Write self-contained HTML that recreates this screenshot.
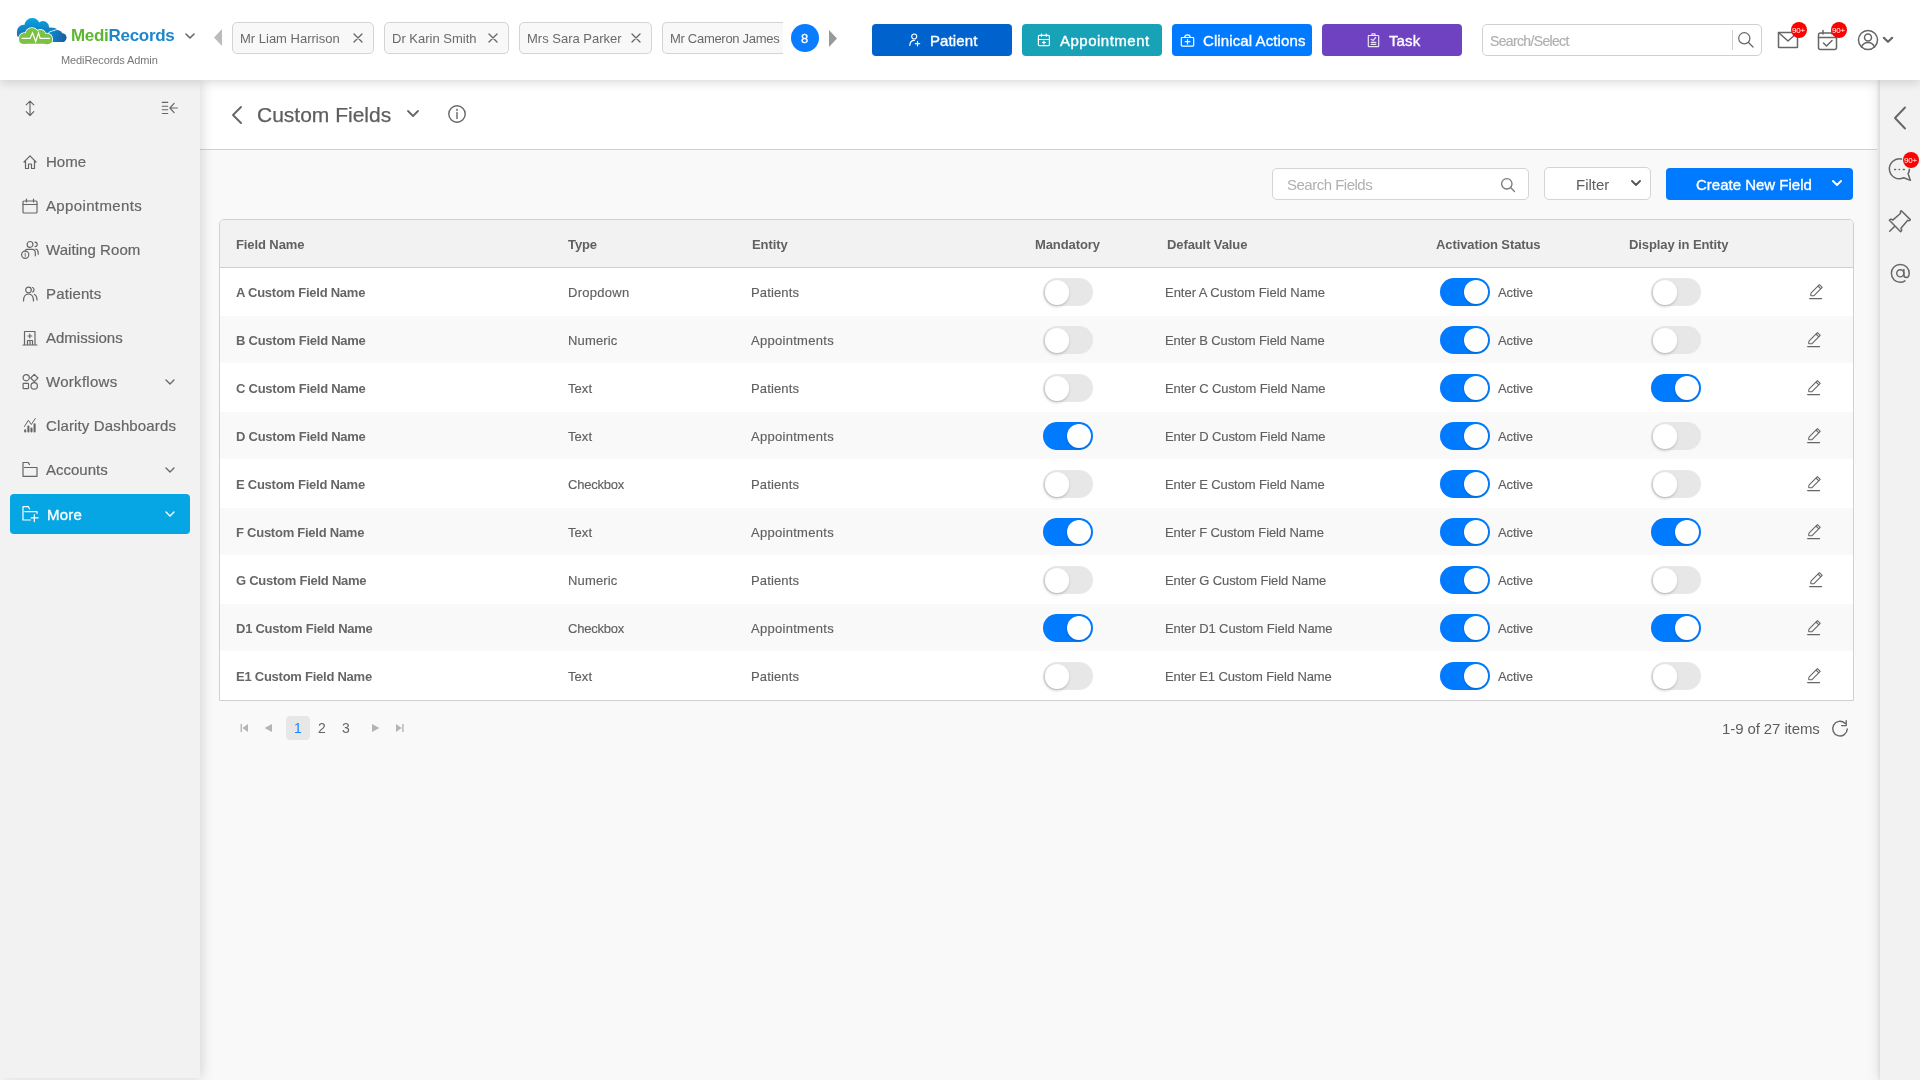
<!DOCTYPE html>
<html><head><meta charset="utf-8"><title>Custom Fields</title>
<style>
html,body{margin:0;padding:0;}
body{width:1920px;height:1080px;overflow:hidden;position:relative;background:#f9f9f9;font-family:"Liberation Sans",sans-serif;}
.t{position:absolute;white-space:nowrap;will-change:transform;}
.b{position:absolute;}
.i{position:absolute;overflow:visible;}
</style></head><body>
<div class="b" style="left:0px;top:0px;width:1920px;height:80px;background:#fff;z-index:5;box-shadow:0 2px 10px rgba(0,0,0,0.16);"></div>
<svg class="i" style="left:14px;top:14px;z-index:6;" width="58" height="34" viewBox="0 0 1842 1080">
<defs>
<linearGradient id="lb" gradientUnits="userSpaceOnUse" x1="0" y1="130" x2="0" y2="760"><stop offset="0" stop-color="#03a5e5"/><stop offset="1" stop-color="#1f6aac"/></linearGradient>
<linearGradient id="lr" gradientUnits="userSpaceOnUse" x1="1150" y1="650" x2="1650" y2="800"><stop offset="0" stop-color="#0a8ad2"/><stop offset="1" stop-color="#1c5b9b"/></linearGradient>
</defs>
<g fill="url(#lb)">
<circle cx="310" cy="560" r="215"/><circle cx="580" cy="385" r="255"/><circle cx="920" cy="420" r="195"/>
<ellipse cx="1170" cy="520" rx="210" ry="95"/><rect x="95" y="520" width="1000" height="210" rx="60"/>
</g>
<g fill="#fff">
<circle cx="1370" cy="700" r="212"/><circle cx="1530" cy="750" r="162"/><ellipse cx="1250" cy="660" rx="180" ry="132"/><rect x="1080" y="700" width="520" height="212" rx="40"/>
</g>
<g fill="url(#lr)">
<circle cx="1370" cy="700" r="190"/><circle cx="1530" cy="750" r="140"/><ellipse cx="1250" cy="660" rx="160" ry="110"/><rect x="1100" y="720" width="500" height="170" rx="20"/>
</g>
<g fill="#fff">
<circle cx="330" cy="775" r="195"/><circle cx="570" cy="655" r="235"/><circle cx="840" cy="665" r="185"/><circle cx="1040" cy="790" r="195"/><rect x="150" y="700" width="1085" height="270" rx="150"/>
</g>
<g fill="#7bc143">
<circle cx="330" cy="775" r="170"/><circle cx="570" cy="655" r="210"/><circle cx="840" cy="665" r="160"/><circle cx="1040" cy="790" r="170"/><rect x="170" y="720" width="1040" height="225" rx="130"/>
</g>
<polyline points="240,775 510,775 590,600 690,880 780,600 830,775 1140,775" fill="none" stroke="#fff" stroke-width="38" stroke-linejoin="miter"/>
</svg>
<div class="t" style="left:71px;top:27.41px;font-size:17px;line-height:17px;height:17px;font-weight:700;color:#1f87c9;letter-spacing:-0.3px;z-index:6;"><span style="color:#5bb630">Medi</span><span style="color:#1f87c9">Records</span></div>
<svg class="i" style="left:185px;top:33px;z-index:6;stroke-width:1.6" width="10" height="7" viewBox="0 0 10 7" fill="none" stroke="#666" stroke-width="1.2" stroke-linecap="round" stroke-linejoin="round"><path d="M1 1 L5 5 L9 1"/></svg>
<div class="t" style="left:61px;top:54.65px;font-size:11px;line-height:11px;height:11px;font-weight:400;color:#777;letter-spacing:-0.1px;z-index:6;">MediRecords Admin</div>
<svg class="i" style="left:214px;top:29px;z-index:6;" width="8" height="17" viewBox="0 0 8 17"><path d="M8 0 L0 8.5 L8 17 Z" fill="#bbb"/></svg>
<div class="b" style="left:232px;top:22px;width:142px;height:32px;background:#f8f8f8;border:1px solid #d4d4d4;border-radius:5px;box-sizing:border-box;z-index:6;"></div>
<div class="t" style="left:240px;top:32.23px;font-size:13px;line-height:13px;height:13px;font-weight:400;color:#6a6a6a;letter-spacing:0px;z-index:6;">Mr Liam Harrison</div>
<svg class="i" style="left:353px;top:33px;z-index:6;stroke-width:1.3" width="10" height="10" viewBox="0 0 10 10" fill="none" stroke="#666" stroke-width="1.2" stroke-linecap="round" stroke-linejoin="round"><path d="M1 1 L9 9 M9 1 L1 9"/></svg>
<div class="b" style="left:384px;top:22px;width:125px;height:32px;background:#f8f8f8;border:1px solid #d4d4d4;border-radius:5px;box-sizing:border-box;z-index:6;"></div>
<div class="t" style="left:392px;top:32.23px;font-size:13px;line-height:13px;height:13px;font-weight:400;color:#6a6a6a;letter-spacing:0px;z-index:6;">Dr Karin Smith</div>
<svg class="i" style="left:488px;top:33px;z-index:6;stroke-width:1.3" width="10" height="10" viewBox="0 0 10 10" fill="none" stroke="#666" stroke-width="1.2" stroke-linecap="round" stroke-linejoin="round"><path d="M1 1 L9 9 M9 1 L1 9"/></svg>
<div class="b" style="left:519px;top:22px;width:133px;height:32px;background:#f8f8f8;border:1px solid #d4d4d4;border-radius:5px;box-sizing:border-box;z-index:6;"></div>
<div class="t" style="left:527px;top:32.23px;font-size:13px;line-height:13px;height:13px;font-weight:400;color:#6a6a6a;letter-spacing:0px;z-index:6;">Mrs Sara Parker</div>
<svg class="i" style="left:631px;top:33px;z-index:6;stroke-width:1.3" width="10" height="10" viewBox="0 0 10 10" fill="none" stroke="#666" stroke-width="1.2" stroke-linecap="round" stroke-linejoin="round"><path d="M1 1 L9 9 M9 1 L1 9"/></svg>
<div class="b" style="left:662px;top:22px;width:121px;height:32px;background:#f8f8f8;border:1px solid #d4d4d4;border-right:none;border-radius:5px 0 0 5px;box-sizing:border-box;overflow:hidden;z-index:6;"></div>
<div class="t" style="left:670px;top:32.23px;font-size:13px;line-height:13px;height:13px;font-weight:400;color:#6a6a6a;letter-spacing:-0.3px;z-index:6;width:113px;overflow:hidden;">Mr Cameron James</div>
<div class="b" style="left:791px;top:24px;width:28px;height:28px;background:#0a7cff;border-radius:50%;z-index:6;"></div>
<div class="t" style="left:801px;top:32.23px;font-size:13px;line-height:13px;height:13px;font-weight:400;color:#fff;letter-spacing:0px;z-index:6;-webkit-text-stroke:0.3px #fff;">8</div>
<svg class="i" style="left:829px;top:30px;z-index:6;" width="8" height="17" viewBox="0 0 8 17"><path d="M0 0 L8 8.5 L0 17 Z" fill="#999"/></svg>
<div class="b" style="left:872px;top:24px;width:140px;height:32px;background:#0062cc;border-radius:4px;z-index:6;"></div>
<div class="t" style="left:930px;top:33.42px;font-size:15px;line-height:15px;height:15px;font-weight:400;color:#fff;letter-spacing:0.1px;z-index:6;-webkit-text-stroke:0.35px #fff;">Patient</div>
<div class="b" style="left:1022px;top:24px;width:140px;height:32px;background:#17a2b8;border-radius:4px;z-index:6;"></div>
<div class="t" style="left:1059.5px;top:33.42px;font-size:15px;line-height:15px;height:15px;font-weight:400;color:#fff;letter-spacing:0.5px;z-index:6;-webkit-text-stroke:0.35px #fff;">Appointment</div>
<div class="b" style="left:1172px;top:24px;width:140px;height:32px;background:#007bff;border-radius:4px;z-index:6;"></div>
<div class="t" style="left:1203px;top:33.42px;font-size:15px;line-height:15px;height:15px;font-weight:400;color:#fff;letter-spacing:0.1px;z-index:6;-webkit-text-stroke:0.35px #fff;">Clinical Actions</div>
<div class="b" style="left:1322px;top:24px;width:140px;height:32px;background:#6f42c1;border-radius:4px;z-index:6;"></div>
<div class="t" style="left:1389px;top:33.42px;font-size:15px;line-height:15px;height:15px;font-weight:400;color:#fff;letter-spacing:0.1px;z-index:6;-webkit-text-stroke:0.35px #fff;">Task</div>
<svg class="i" style="left:907px;top:33px;z-index:6;" width="14" height="14" viewBox="0 0 14 14" fill="none" stroke="#666" stroke-width="1.2" stroke-linecap="round" stroke-linejoin="round"><g stroke="#fff"><circle cx="7.2" cy="3.5" r="2.5"/><path d="M2.8 12.5 Q3 7.4 7.4 7.4"/><path d="M10.5 8.4 V12.8 M8.3 10.6 H12.7"/></g></svg>
<svg class="i" style="left:1036px;top:32px;z-index:6;" width="15" height="15" viewBox="0 0 15 15" fill="none" stroke="#666" stroke-width="1.2" stroke-linecap="round" stroke-linejoin="round"><g stroke="#fff"><rect x="2.4" y="3.3" width="11" height="10.4" rx="1"/><path d="M2.4 7.5 H13.4 M5.5 2 V4.2 M10.2 2 V4.2 M7.9 9 V12 M6.4 10.5 H9.4"/></g></svg>
<svg class="i" style="left:1180px;top:32px;z-index:6;" width="15" height="15" viewBox="0 0 15 15" fill="none" stroke="#666" stroke-width="1.2" stroke-linecap="round" stroke-linejoin="round"><g stroke="#fff"><rect x="1.3" y="5.5" width="12.4" height="8.6" rx="0.8"/><path d="M4.8 5.3 Q4.8 2.8 7.5 2.8 Q10.2 2.8 10.2 5.3 M7.5 7.5 V12 M5.2 9.7 H9.8"/></g></svg>
<svg class="i" style="left:1366px;top:32px;z-index:6;" width="14" height="15" viewBox="0 0 14 15" fill="none" stroke="#666" stroke-width="1.2" stroke-linecap="round" stroke-linejoin="round"><g stroke="#fff" stroke-opacity="0.85"><rect x="2.3" y="3.5" width="10.4" height="11.2" rx="0.6"/><path d="M6 3.3 V1.8 H9 V3.3 M5.2 7.3 L7 8.6 L9.6 5.5 M5.2 10.4 H9.8 M5.2 12.4 H9.8"/></g></svg>
<div class="b" style="left:1482px;top:24px;width:280px;height:32px;background:#fff;border:1px solid #d0d0d0;border-radius:5px;box-sizing:border-box;z-index:6;"></div>
<div class="t" style="left:1490px;top:33.83px;font-size:14px;line-height:14px;height:14px;font-weight:400;color:#b0b0b0;letter-spacing:-0.65px;z-index:6;-webkit-text-stroke:0.2px #b0b0b0;">Search/Select</div>
<div class="b" style="left:1732px;top:30px;width:1px;height:20px;background:#d0d0d0;z-index:6;"></div>
<svg class="i" style="left:1737px;top:31px;z-index:6;stroke-width:1.2" width="18" height="18" viewBox="0 0 18 18" fill="none" stroke="#666" stroke-width="1.2" stroke-linecap="round" stroke-linejoin="round"><circle cx="7.3" cy="7.3" r="5.6"/><path d="M11.5 11.5 L16 16"/></svg>
<svg class="i" style="left:1777px;top:30px;z-index:6;stroke-width:1.5" width="22" height="19" viewBox="0 0 22 19" fill="none" stroke="#666" stroke-width="1.2" stroke-linecap="round" stroke-linejoin="round"><rect x="1.5" y="2.5" width="19" height="15" rx="0.5"/><path d="M1.5 2.5 L11 11 L20.5 2.5"/></svg>
<div class="b" style="left:1791px;top:22px;width:16px;height:16px;background:#f00;border-radius:50%;z-index:6;"></div>
<div class="t" style="left:1792px;top:26.96px;font-size:8px;line-height:8px;height:8px;font-weight:400;color:#fff;letter-spacing:-0.25px;z-index:6;">90+</div>
<svg class="i" style="left:1817px;top:29px;z-index:6;stroke-width:1.5" width="22" height="22" viewBox="0 0 22 22" fill="none" stroke="#666" stroke-width="1.2" stroke-linecap="round" stroke-linejoin="round"><rect x="1.5" y="4" width="18" height="16.5" rx="2"/><path d="M1.5 8.5 H19.5 M6 1.5 V5 M15 1.5 V5 M6.5 14 L9.5 17 L15 11.5"/></svg>
<div class="b" style="left:1831px;top:22px;width:16px;height:16px;background:#f00;border-radius:50%;z-index:6;"></div>
<div class="t" style="left:1832px;top:26.96px;font-size:8px;line-height:8px;height:8px;font-weight:400;color:#fff;letter-spacing:-0.25px;z-index:6;">90+</div>
<svg class="i" style="left:1856px;top:29px;z-index:6;stroke-width:1.5" width="24" height="22" viewBox="0 0 24 22" fill="none" stroke="#666" stroke-width="1.2" stroke-linecap="round" stroke-linejoin="round"><circle cx="12" cy="11" r="9.5"/><circle cx="12" cy="8.5" r="3.5"/><path d="M5.5 18 C7 14.5 9.5 13.5 12 13.5 C14.5 13.5 17 14.5 18.5 18"/></svg>
<svg class="i" style="left:1882px;top:36px;z-index:6;stroke-width:2.2" width="12" height="8" viewBox="0 0 12 8" fill="none" stroke="#666" stroke-width="1.2" stroke-linecap="round" stroke-linejoin="round"><path d="M1.8 1.8 L6 5.8 L10.2 1.8"/></svg>
<div class="b" style="left:0px;top:80px;width:200px;height:998px;background:#f2f2f2;z-index:3;box-shadow:2px 0 12px rgba(0,0,0,0.15);"></div>
<svg class="i" style="left:23px;top:100px;z-index:4;stroke-width:1.15" width="14" height="17" viewBox="0 0 14 17" fill="none" stroke="#666" stroke-width="1.2" stroke-linecap="round" stroke-linejoin="round"><path d="M7 1.3 V15.3 M3.2 4.9 L7 1.1 L10.8 4.9 M3.2 11.7 L7 15.5 L10.8 11.7"/></svg>
<svg class="i" style="left:161px;top:100px;z-index:4;stroke-width:1.15" width="18" height="15" viewBox="0 0 18 15" fill="none" stroke="#666" stroke-width="1.2" stroke-linecap="round" stroke-linejoin="round"><path d="M1.3 2.4 H6.7 M1.3 6.2 H6.7 M1.3 9.7 H6.7 M1.3 13.5 H6.7 M8.9 8 H16.4 M13.1 3.3 L8.9 8 L13.1 12.6"/></svg>
<svg class="i" style="left:22px;top:154px;z-index:4;stroke-width:1.2" width="16" height="16" viewBox="0 0 16 16" fill="none" stroke="#666" stroke-width="1.2" stroke-linecap="round" stroke-linejoin="round"><path d="M2 8 L8 1.8 L14 8 M3.5 6.5 V14.5 H6.5 V10 H9.5 V14.5 H12.5 V6.5"/></svg>
<div class="t" style="left:46.0px;top:154.43px;font-size:15px;line-height:15px;height:15px;font-weight:400;color:#666;letter-spacing:0px;z-index:4;-webkit-text-stroke:0.2px #666;">Home</div>
<svg class="i" style="left:22px;top:198px;z-index:4;stroke-width:1.2" width="16" height="16" viewBox="0 0 16 16" fill="none" stroke="#666" stroke-width="1.2" stroke-linecap="round" stroke-linejoin="round"><rect x="1" y="3" width="14" height="12" rx="1"/><path d="M1 6.5 H15 M4.5 1 V4 M11.5 1 V4"/></svg>
<div class="t" style="left:46.0px;top:198.43px;font-size:15px;line-height:15px;height:15px;font-weight:400;color:#666;letter-spacing:0.36px;z-index:4;-webkit-text-stroke:0.2px #666;">Appointments</div>
<svg class="i" style="left:22px;top:242px;z-index:4;stroke-width:1.2" width="16" height="16" viewBox="0 0 16 16" fill="none" stroke="#666" stroke-width="1.2" stroke-linecap="round" stroke-linejoin="round"><circle cx="8.05" cy="2.4" r="2.9"/><path d="M13 0.2 A2.2 2.2 0 0 1 13 4.6 M3.2 8.9 Q3.5 7.3 5 7.3 H10.2 Q13.3 7.3 13.3 10.5 V13.8 M13.8 7 Q16.2 7.6 16.2 10.8 V12.3"/><circle cx="3.2" cy="12.8" r="3.6"/><path d="M3.2 11.2 V14.4" stroke-width="0.9"/></svg>
<div class="t" style="left:46.0px;top:242.43px;font-size:15px;line-height:15px;height:15px;font-weight:400;color:#666;letter-spacing:0.06px;z-index:4;-webkit-text-stroke:0.2px #666;">Waiting Room</div>
<svg class="i" style="left:22px;top:286px;z-index:4;stroke-width:1.2" width="16" height="16" viewBox="0 0 16 16" fill="none" stroke="#666" stroke-width="1.2" stroke-linecap="round" stroke-linejoin="round"><circle cx="6.5" cy="4" r="2.8"/><path d="M10.5 1.5 C12.5 2 12.5 5.5 10.5 6 M1.5 15 C1.5 10 3.5 8 6.5 8 C9.5 8 11.5 10 11.5 15 M12.5 8.5 C14.5 9.5 15 12 15 14"/></svg>
<div class="t" style="left:46.0px;top:286.43px;font-size:15px;line-height:15px;height:15px;font-weight:400;color:#666;letter-spacing:0.14px;z-index:4;-webkit-text-stroke:0.2px #666;">Patients</div>
<svg class="i" style="left:22px;top:330px;z-index:4;stroke-width:1.2" width="16" height="16" viewBox="0 0 16 16" fill="none" stroke="#666" stroke-width="1.2" stroke-linecap="round" stroke-linejoin="round"><path d="M2.5 15 V1.5 H13 V15 M1 15 H15 M7.8 4 V8 M5.8 6 H9.8 M5.5 15 V10.5 H10.5 V15 M8 10.5 V15"/></svg>
<div class="t" style="left:46.0px;top:330.43px;font-size:15px;line-height:15px;height:15px;font-weight:400;color:#666;letter-spacing:0px;z-index:4;-webkit-text-stroke:0.2px #666;">Admissions</div>
<svg class="i" style="left:22px;top:374px;z-index:4;stroke-width:1.2" width="16" height="16" viewBox="0 0 16 16" fill="none" stroke="#666" stroke-width="1.2" stroke-linecap="round" stroke-linejoin="round"><circle cx="4.2" cy="3.7" r="3.1"/><path d="M12.3 0.4 L15.9 4 L12.3 7.6 L8.7 4 Z"/><rect x="1.1" y="9.3" width="5.4" height="5.4" rx="0.6"/><circle cx="12.2" cy="11.9" r="3.2"/></svg>
<div class="t" style="left:46.0px;top:374.43px;font-size:15px;line-height:15px;height:15px;font-weight:400;color:#666;letter-spacing:0.29px;z-index:4;-webkit-text-stroke:0.2px #666;">Workflows</div>
<svg class="i" style="left:22px;top:418px;z-index:4;stroke-width:1.2" width="16" height="16" viewBox="0 0 16 16" fill="none" stroke="#666" stroke-width="1.2" stroke-linecap="round" stroke-linejoin="round"><path d="M3.2 12.4 V13.4 M6.4 8.6 V13.4 M9.5 10.5 V13.4 M12.6 6.4 V13.4" stroke-width="2.1"/><path d="M2.5 8.5 L6.4 2.2 L9.3 6.5 L13.3 0.5" stroke-width="1"/></svg>
<div class="t" style="left:46.0px;top:418.43px;font-size:15px;line-height:15px;height:15px;font-weight:400;color:#666;letter-spacing:0.14px;z-index:4;-webkit-text-stroke:0.2px #666;">Clarity Dashboards</div>
<svg class="i" style="left:22px;top:462px;z-index:4;stroke-width:1.2" width="16" height="16" viewBox="0 0 16 16" fill="none" stroke="#666" stroke-width="1.2" stroke-linecap="round" stroke-linejoin="round"><path d="M1 14.3 V0.5 H6.3 L7.4 2.4 M2.4 5.5 H15 V14.3 H1"/></svg>
<div class="t" style="left:46.0px;top:462.43px;font-size:15px;line-height:15px;height:15px;font-weight:400;color:#666;letter-spacing:0px;z-index:4;-webkit-text-stroke:0.2px #666;">Accounts</div>
<svg class="i" style="left:165px;top:379px;z-index:4;stroke-width:1.3" width="10" height="7" viewBox="0 0 10 7" fill="none" stroke="#666" stroke-width="1.2" stroke-linecap="round" stroke-linejoin="round"><path d="M1 1 L5 5 L9 1"/></svg>
<svg class="i" style="left:165px;top:467px;z-index:4;stroke-width:1.3" width="10" height="7" viewBox="0 0 10 7" fill="none" stroke="#666" stroke-width="1.2" stroke-linecap="round" stroke-linejoin="round"><path d="M1 1 L5 5 L9 1"/></svg>
<div class="b" style="left:10px;top:494px;width:180px;height:40px;background:#06a5e3;border-radius:4px;z-index:4;"></div>
<svg class="i" style="left:22px;top:506px;z-index:4;stroke:#fff;stroke-width:1.2" width="17" height="17" viewBox="0 0 17 17" fill="none" stroke="#666" stroke-width="1.2" stroke-linecap="round" stroke-linejoin="round"><path d="M1 14 V0.7 H6.5 L7.5 3 M2.8 5.6 H15 V7.5 M1 14 H8.5 M12.3 8.7 V15.7 M9.2 11.8 H16.1"/></svg>
<div class="t" style="left:46.5px;top:506.93px;font-size:15px;line-height:15px;height:15px;font-weight:400;color:#fff;letter-spacing:0.2px;z-index:4;-webkit-text-stroke:0.35px #fff;">More</div>
<svg class="i" style="left:165px;top:511px;z-index:4;stroke:#fff;stroke-width:1.4" width="10" height="7" viewBox="0 0 10 7" fill="none" stroke="#666" stroke-width="1.2" stroke-linecap="round" stroke-linejoin="round"><path d="M1 1 L5 5 L9 1"/></svg>
<div class="b" style="left:1880px;top:80px;width:40px;height:1000px;background:#f2f2f2;z-index:3;box-shadow:-1px 0 3px rgba(0,0,0,0.08), -2px 0 12px rgba(0,0,0,0.10);"></div>
<svg class="i" style="left:1893px;top:106px;z-index:4;stroke-width:1.9" width="14" height="24" viewBox="0 0 14 24" fill="none" stroke="#666" stroke-width="1.2" stroke-linecap="round" stroke-linejoin="round"><path d="M12 1.5 L2 12 L12 22.5"/></svg>
<svg class="i" style="left:1880px;top:150px;z-index:4;stroke-width:1.5" width="40" height="40" viewBox="0 0 40 40" fill="none" stroke="#666" stroke-width="1.2" stroke-linecap="round" stroke-linejoin="round"><path d="M23.7 27.8 A10 10 0 1 1 28.1 23.7 L30.4 30.4 Z"/><path d="M14.6 19.4 H15.6 M19.1 19.4 H19.5 M23.3 19.4 H24.3"/></svg>
<div class="b" style="left:1903px;top:152px;width:16px;height:16px;background:#f00;border-radius:50%;box-shadow:0 0 0 1px #f2f2f2;z-index:4;"></div>
<div class="t" style="left:1904px;top:156.96px;font-size:8px;line-height:8px;height:8px;font-weight:400;color:#fff;letter-spacing:-0.25px;z-index:4;">90+</div>
<svg class="i" style="left:1876.5px;top:208.2px;z-index:4;" width="36" height="36" viewBox="-18 -18 36 36" fill="none" stroke="#666" stroke-width="1.5" stroke-linejoin="round" stroke-linecap="round"><g transform="rotate(45)"><path d="M-6.3 -15.3 H6.3 Q6.9 -13.6 5 -13 L5.8 -2.6 Q8.2 -2.4 8 0 H-8 Q-8.2 -2.4 -5.8 -2.6 L-5 -13 Q-6.9 -13.6 -6.3 -15.3 Z M0 0 V7.5"/></g></svg>
<svg class="i" style="left:1889.8px;top:263.2px;z-index:4;stroke-width:1.55" width="20.6" height="20.6" viewBox="0 0 22 22" fill="none" stroke="#666" stroke-width="1.2" stroke-linecap="round" stroke-linejoin="round"><circle cx="11" cy="11" r="3.8"/><path d="M14.8 7 V12.5 C14.8 14.5 16 15.5 17.5 15.5 C19.5 15.5 20.5 13.5 20.5 11 C20.5 5.5 16.5 1.5 11 1.5 C5.5 1.5 1.5 5.5 1.5 11 C1.5 16.5 5.5 20.5 11 20.5 C13 20.5 14.5 20 16 19"/></svg>
<div class="b" style="left:200px;top:80px;width:1677px;height:69px;background:#fff;border-bottom:1px solid #d2d2d2;z-index:1;"></div>
<svg class="i" style="left:231px;top:106px;z-index:2;stroke-width:1.9" width="12" height="18" viewBox="0 0 12 18" fill="none" stroke="#666" stroke-width="1.2" stroke-linecap="round" stroke-linejoin="round"><path d="M10 1 L2 9 L10 17"/></svg>
<div class="t" style="left:257px;top:104.30px;font-size:21px;line-height:21px;height:21px;font-weight:400;color:#5e5e5e;letter-spacing:0px;z-index:2;-webkit-text-stroke:0.25px #5e5e5e;">Custom Fields</div>
<svg class="i" style="left:406px;top:109px;z-index:2;stroke-width:1.8" width="14" height="10" viewBox="0 0 14 10" fill="none" stroke="#666" stroke-width="1.2" stroke-linecap="round" stroke-linejoin="round"><path d="M2 2 L7 7 L12 2"/></svg>
<svg class="i" style="left:447px;top:104px;z-index:2;stroke-width:1.4" width="20" height="20" viewBox="0 0 20 20" fill="none" stroke="#666" stroke-width="1.2" stroke-linecap="round" stroke-linejoin="round"><circle cx="10" cy="10" r="8.2"/><path d="M10 8.5 V14.5 M10 5.2 V6.4"/></svg>
<div class="b" style="left:1272px;top:168px;width:257px;height:32px;background:#fff;border:1px solid #d4d4d4;border-radius:5px;box-sizing:border-box;z-index:2;"></div>
<div class="t" style="left:1287px;top:176.62px;font-size:15px;line-height:15px;height:15px;font-weight:400;color:#b0b0b0;letter-spacing:-0.5px;z-index:2;">Search Fields</div>
<svg class="i" style="left:1500px;top:177px;z-index:2;stroke-width:1.3;stroke:#777" width="16" height="16" viewBox="0 0 16 16" fill="none" stroke="#666" stroke-width="1.2" stroke-linecap="round" stroke-linejoin="round"><circle cx="6.8" cy="6.8" r="5.2"/><path d="M10.8 10.8 L14.5 14.5"/></svg>
<div class="b" style="left:1544px;top:167px;width:107px;height:33px;background:#fff;border:1px solid #d4d4d4;border-radius:5px;box-sizing:border-box;z-index:2;"></div>
<div class="t" style="left:1575.5px;top:176.62px;font-size:15px;line-height:15px;height:15px;font-weight:400;color:#5e5e5e;letter-spacing:0px;z-index:2;">Filter</div>
<svg class="i" style="left:1630px;top:179px;z-index:2;stroke-width:1.9;stroke:#555" width="12" height="9" viewBox="0 0 12 9" fill="none" stroke="#666" stroke-width="1.2" stroke-linecap="round" stroke-linejoin="round"><path d="M2 2 L6 6 L10 2"/></svg>
<div class="b" style="left:1666px;top:168px;width:187px;height:32px;background:#007bff;border-radius:4px;z-index:2;"></div>
<div class="t" style="left:1696px;top:176.62px;font-size:15px;line-height:15px;height:15px;font-weight:400;color:#fff;letter-spacing:0.0px;z-index:2;-webkit-text-stroke:0.35px #fff;">Create New Field</div>
<svg class="i" style="left:1831px;top:179px;z-index:2;stroke-width:1.9;stroke:#fff" width="12" height="9" viewBox="0 0 12 9" fill="none" stroke="#666" stroke-width="1.2" stroke-linecap="round" stroke-linejoin="round"><path d="M2 2 L6 6 L10 2"/></svg>
<div class="b" style="left:219px;top:219px;width:1635px;height:482px;background:#fff;border:1px solid #d0d0d0;border-radius:5px 5px 0 0;box-sizing:border-box;overflow:hidden;z-index:2;"></div>
<div class="b" style="left:220px;top:220px;width:1633px;height:47px;background:#f2f2f2;border-bottom:1px solid #cfcfcf;border-radius:4px 4px 0 0;z-index:2;"></div>
<div class="t" style="left:236px;top:238.24px;font-size:13px;line-height:13px;height:13px;font-weight:700;color:#606060;letter-spacing:-0.1px;z-index:2;">Field Name</div>
<div class="t" style="left:568px;top:238.24px;font-size:13px;line-height:13px;height:13px;font-weight:700;color:#606060;letter-spacing:-0.1px;z-index:2;">Type</div>
<div class="t" style="left:751.5px;top:238.24px;font-size:13px;line-height:13px;height:13px;font-weight:700;color:#606060;letter-spacing:-0.1px;z-index:2;">Entity</div>
<div class="t" style="left:1035px;top:238.24px;font-size:13px;line-height:13px;height:13px;font-weight:700;color:#606060;letter-spacing:-0.1px;z-index:2;">Mandatory</div>
<div class="t" style="left:1166.5px;top:238.24px;font-size:13px;line-height:13px;height:13px;font-weight:700;color:#606060;letter-spacing:-0.1px;z-index:2;">Default Value</div>
<div class="t" style="left:1435.5px;top:238.24px;font-size:13px;line-height:13px;height:13px;font-weight:700;color:#606060;letter-spacing:-0.1px;z-index:2;">Activation Status</div>
<div class="t" style="left:1628.5px;top:238.24px;font-size:13px;line-height:13px;height:13px;font-weight:700;color:#606060;letter-spacing:-0.1px;z-index:2;">Display in Entity</div>
<div class="t" style="left:236px;top:286.24px;font-size:13px;line-height:13px;height:13px;font-weight:700;color:#666;letter-spacing:-0.25px;z-index:2;">A Custom Field Name</div>
<div class="t" style="left:568px;top:286.24px;font-size:13px;line-height:13px;height:13px;font-weight:400;color:#606060;letter-spacing:0.28px;z-index:2;-webkit-text-stroke:0.15px #606060;">Dropdown</div>
<div class="t" style="left:751.2px;top:286.24px;font-size:13px;line-height:13px;height:13px;font-weight:400;color:#606060;letter-spacing:0.13px;z-index:2;-webkit-text-stroke:0.15px #606060;">Patients</div>
<div class="b" style="left:1043px;top:278px;width:50px;height:28px;background:#e8e7e7;border-radius:14px;z-index:2;"></div><div class="b" style="left:1044.5px;top:280px;width:24.5px;height:24.5px;background:#fff;border-radius:50%;box-shadow:-0.5px 1.5px 3px rgba(0,0,0,0.22);z-index:2;"></div>
<div class="t" style="left:1165.2px;top:286.24px;font-size:13px;line-height:13px;height:13px;font-weight:400;color:#606060;letter-spacing:-0.02px;z-index:2;-webkit-text-stroke:0.15px #606060;">Enter A Custom Field Name</div>
<div class="b" style="left:1440px;top:278px;width:50px;height:28px;background:#007bff;border-radius:14px;z-index:2;"></div><div class="b" style="left:1464px;top:280px;width:24px;height:24px;background:#fff;border-radius:50%;box-shadow:-0.5px 1px 2px rgba(0,0,0,0.18);z-index:2;"></div>
<div class="t" style="left:1498px;top:286.24px;font-size:13px;line-height:13px;height:13px;font-weight:400;color:#606060;letter-spacing:-0.1px;z-index:2;-webkit-text-stroke:0.15px #606060;">Active</div>
<div class="b" style="left:1651px;top:278px;width:50px;height:28px;background:#e8e7e7;border-radius:14px;z-index:2;"></div><div class="b" style="left:1652.5px;top:280px;width:24.5px;height:24.5px;background:#fff;border-radius:50%;box-shadow:-0.5px 1.5px 3px rgba(0,0,0,0.22);z-index:2;"></div>
<svg class="i" style="left:1809.1000000000001px;top:283px;z-index:2;stroke-width:1.1" width="16" height="17" viewBox="0 0 16 17" fill="none" stroke="#666" stroke-width="1.2" stroke-linecap="round" stroke-linejoin="round"><path d="M2.2 9.8 L10.4 1.6 L13.2 4.4 L5 12.6 L2.8 12.8 Q1.6 12.8 1.7 11.7 Z M9 3 L11.8 5.8 M0.6 15.6 H12.6"/></svg>
<div class="b" style="left:220px;top:316px;width:1633px;height:47px;background:#f9f9f9;z-index:2;"></div>
<div class="t" style="left:236px;top:334.24px;font-size:13px;line-height:13px;height:13px;font-weight:700;color:#666;letter-spacing:-0.25px;z-index:2;">B Custom Field Name</div>
<div class="t" style="left:568px;top:334.24px;font-size:13px;line-height:13px;height:13px;font-weight:400;color:#606060;letter-spacing:0.15px;z-index:2;-webkit-text-stroke:0.15px #606060;">Numeric</div>
<div class="t" style="left:751.2px;top:334.24px;font-size:13px;line-height:13px;height:13px;font-weight:400;color:#606060;letter-spacing:0.29px;z-index:2;-webkit-text-stroke:0.15px #606060;">Appointments</div>
<div class="b" style="left:1043px;top:326px;width:50px;height:28px;background:#e8e7e7;border-radius:14px;z-index:2;"></div><div class="b" style="left:1044.5px;top:328px;width:24.5px;height:24.5px;background:#fff;border-radius:50%;box-shadow:-0.5px 1.5px 3px rgba(0,0,0,0.22);z-index:2;"></div>
<div class="t" style="left:1165.2px;top:334.24px;font-size:13px;line-height:13px;height:13px;font-weight:400;color:#606060;letter-spacing:-0.09px;z-index:2;-webkit-text-stroke:0.15px #606060;">Enter B Custom Field Name</div>
<div class="b" style="left:1440px;top:326px;width:50px;height:28px;background:#007bff;border-radius:14px;z-index:2;"></div><div class="b" style="left:1464px;top:328px;width:24px;height:24px;background:#fff;border-radius:50%;box-shadow:-0.5px 1px 2px rgba(0,0,0,0.18);z-index:2;"></div>
<div class="t" style="left:1498px;top:334.24px;font-size:13px;line-height:13px;height:13px;font-weight:400;color:#606060;letter-spacing:-0.1px;z-index:2;-webkit-text-stroke:0.15px #606060;">Active</div>
<div class="b" style="left:1651px;top:326px;width:50px;height:28px;background:#e8e7e7;border-radius:14px;z-index:2;"></div><div class="b" style="left:1652.5px;top:328px;width:24.5px;height:24.5px;background:#fff;border-radius:50%;box-shadow:-0.5px 1.5px 3px rgba(0,0,0,0.22);z-index:2;"></div>
<svg class="i" style="left:1806.7px;top:331px;z-index:2;stroke-width:1.1" width="16" height="17" viewBox="0 0 16 17" fill="none" stroke="#666" stroke-width="1.2" stroke-linecap="round" stroke-linejoin="round"><path d="M2.2 9.8 L10.4 1.6 L13.2 4.4 L5 12.6 L2.8 12.8 Q1.6 12.8 1.7 11.7 Z M9 3 L11.8 5.8 M0.6 15.6 H12.6"/></svg>
<div class="t" style="left:236px;top:382.24px;font-size:13px;line-height:13px;height:13px;font-weight:700;color:#666;letter-spacing:-0.25px;z-index:2;">C Custom Field Name</div>
<div class="t" style="left:568px;top:382.24px;font-size:13px;line-height:13px;height:13px;font-weight:400;color:#606060;letter-spacing:0.05px;z-index:2;-webkit-text-stroke:0.15px #606060;">Text</div>
<div class="t" style="left:751.2px;top:382.24px;font-size:13px;line-height:13px;height:13px;font-weight:400;color:#606060;letter-spacing:0.13px;z-index:2;-webkit-text-stroke:0.15px #606060;">Patients</div>
<div class="b" style="left:1043px;top:374px;width:50px;height:28px;background:#e8e7e7;border-radius:14px;z-index:2;"></div><div class="b" style="left:1044.5px;top:376px;width:24.5px;height:24.5px;background:#fff;border-radius:50%;box-shadow:-0.5px 1.5px 3px rgba(0,0,0,0.22);z-index:2;"></div>
<div class="t" style="left:1165.2px;top:382.24px;font-size:13px;line-height:13px;height:13px;font-weight:400;color:#606060;letter-spacing:-0.09px;z-index:2;-webkit-text-stroke:0.15px #606060;">Enter C Custom Field Name</div>
<div class="b" style="left:1440px;top:374px;width:50px;height:28px;background:#007bff;border-radius:14px;z-index:2;"></div><div class="b" style="left:1464px;top:376px;width:24px;height:24px;background:#fff;border-radius:50%;box-shadow:-0.5px 1px 2px rgba(0,0,0,0.18);z-index:2;"></div>
<div class="t" style="left:1498px;top:382.24px;font-size:13px;line-height:13px;height:13px;font-weight:400;color:#606060;letter-spacing:-0.1px;z-index:2;-webkit-text-stroke:0.15px #606060;">Active</div>
<div class="b" style="left:1651px;top:374px;width:50px;height:28px;background:#007bff;border-radius:14px;z-index:2;"></div><div class="b" style="left:1675px;top:376px;width:24px;height:24px;background:#fff;border-radius:50%;box-shadow:-0.5px 1px 2px rgba(0,0,0,0.18);z-index:2;"></div>
<svg class="i" style="left:1806.7px;top:379px;z-index:2;stroke-width:1.1" width="16" height="17" viewBox="0 0 16 17" fill="none" stroke="#666" stroke-width="1.2" stroke-linecap="round" stroke-linejoin="round"><path d="M2.2 9.8 L10.4 1.6 L13.2 4.4 L5 12.6 L2.8 12.8 Q1.6 12.8 1.7 11.7 Z M9 3 L11.8 5.8 M0.6 15.6 H12.6"/></svg>
<div class="b" style="left:220px;top:412px;width:1633px;height:47px;background:#f9f9f9;z-index:2;"></div>
<div class="t" style="left:236px;top:430.24px;font-size:13px;line-height:13px;height:13px;font-weight:700;color:#666;letter-spacing:-0.25px;z-index:2;">D Custom Field Name</div>
<div class="t" style="left:568px;top:430.24px;font-size:13px;line-height:13px;height:13px;font-weight:400;color:#606060;letter-spacing:0.05px;z-index:2;-webkit-text-stroke:0.15px #606060;">Text</div>
<div class="t" style="left:751.2px;top:430.24px;font-size:13px;line-height:13px;height:13px;font-weight:400;color:#606060;letter-spacing:0.29px;z-index:2;-webkit-text-stroke:0.15px #606060;">Appointments</div>
<div class="b" style="left:1043px;top:422px;width:50px;height:28px;background:#007bff;border-radius:14px;z-index:2;"></div><div class="b" style="left:1067px;top:424px;width:24px;height:24px;background:#fff;border-radius:50%;box-shadow:-0.5px 1px 2px rgba(0,0,0,0.18);z-index:2;"></div>
<div class="t" style="left:1165.2px;top:430.24px;font-size:13px;line-height:13px;height:13px;font-weight:400;color:#606060;letter-spacing:-0.09px;z-index:2;-webkit-text-stroke:0.15px #606060;">Enter D Custom Field Name</div>
<div class="b" style="left:1440px;top:422px;width:50px;height:28px;background:#007bff;border-radius:14px;z-index:2;"></div><div class="b" style="left:1464px;top:424px;width:24px;height:24px;background:#fff;border-radius:50%;box-shadow:-0.5px 1px 2px rgba(0,0,0,0.18);z-index:2;"></div>
<div class="t" style="left:1498px;top:430.24px;font-size:13px;line-height:13px;height:13px;font-weight:400;color:#606060;letter-spacing:-0.1px;z-index:2;-webkit-text-stroke:0.15px #606060;">Active</div>
<div class="b" style="left:1651px;top:422px;width:50px;height:28px;background:#e8e7e7;border-radius:14px;z-index:2;"></div><div class="b" style="left:1652.5px;top:424px;width:24.5px;height:24.5px;background:#fff;border-radius:50%;box-shadow:-0.5px 1.5px 3px rgba(0,0,0,0.22);z-index:2;"></div>
<svg class="i" style="left:1806.7px;top:427px;z-index:2;stroke-width:1.1" width="16" height="17" viewBox="0 0 16 17" fill="none" stroke="#666" stroke-width="1.2" stroke-linecap="round" stroke-linejoin="round"><path d="M2.2 9.8 L10.4 1.6 L13.2 4.4 L5 12.6 L2.8 12.8 Q1.6 12.8 1.7 11.7 Z M9 3 L11.8 5.8 M0.6 15.6 H12.6"/></svg>
<div class="t" style="left:236px;top:478.24px;font-size:13px;line-height:13px;height:13px;font-weight:700;color:#666;letter-spacing:-0.25px;z-index:2;">E Custom Field Name</div>
<div class="t" style="left:568px;top:478.24px;font-size:13px;line-height:13px;height:13px;font-weight:400;color:#606060;letter-spacing:-0.24px;z-index:2;-webkit-text-stroke:0.15px #606060;">Checkbox</div>
<div class="t" style="left:751.2px;top:478.24px;font-size:13px;line-height:13px;height:13px;font-weight:400;color:#606060;letter-spacing:0.13px;z-index:2;-webkit-text-stroke:0.15px #606060;">Patients</div>
<div class="b" style="left:1043px;top:470px;width:50px;height:28px;background:#e8e7e7;border-radius:14px;z-index:2;"></div><div class="b" style="left:1044.5px;top:472px;width:24.5px;height:24.5px;background:#fff;border-radius:50%;box-shadow:-0.5px 1.5px 3px rgba(0,0,0,0.22);z-index:2;"></div>
<div class="t" style="left:1165.2px;top:478.24px;font-size:13px;line-height:13px;height:13px;font-weight:400;color:#606060;letter-spacing:-0.09px;z-index:2;-webkit-text-stroke:0.15px #606060;">Enter E Custom Field Name</div>
<div class="b" style="left:1440px;top:470px;width:50px;height:28px;background:#007bff;border-radius:14px;z-index:2;"></div><div class="b" style="left:1464px;top:472px;width:24px;height:24px;background:#fff;border-radius:50%;box-shadow:-0.5px 1px 2px rgba(0,0,0,0.18);z-index:2;"></div>
<div class="t" style="left:1498px;top:478.24px;font-size:13px;line-height:13px;height:13px;font-weight:400;color:#606060;letter-spacing:-0.1px;z-index:2;-webkit-text-stroke:0.15px #606060;">Active</div>
<div class="b" style="left:1651px;top:470px;width:50px;height:28px;background:#e8e7e7;border-radius:14px;z-index:2;"></div><div class="b" style="left:1652.5px;top:472px;width:24.5px;height:24.5px;background:#fff;border-radius:50%;box-shadow:-0.5px 1.5px 3px rgba(0,0,0,0.22);z-index:2;"></div>
<svg class="i" style="left:1806.7px;top:475px;z-index:2;stroke-width:1.1" width="16" height="17" viewBox="0 0 16 17" fill="none" stroke="#666" stroke-width="1.2" stroke-linecap="round" stroke-linejoin="round"><path d="M2.2 9.8 L10.4 1.6 L13.2 4.4 L5 12.6 L2.8 12.8 Q1.6 12.8 1.7 11.7 Z M9 3 L11.8 5.8 M0.6 15.6 H12.6"/></svg>
<div class="b" style="left:220px;top:508px;width:1633px;height:47px;background:#f9f9f9;z-index:2;"></div>
<div class="t" style="left:236px;top:526.24px;font-size:13px;line-height:13px;height:13px;font-weight:700;color:#666;letter-spacing:-0.25px;z-index:2;">F Custom Field Name</div>
<div class="t" style="left:568px;top:526.24px;font-size:13px;line-height:13px;height:13px;font-weight:400;color:#606060;letter-spacing:0.05px;z-index:2;-webkit-text-stroke:0.15px #606060;">Text</div>
<div class="t" style="left:751.2px;top:526.24px;font-size:13px;line-height:13px;height:13px;font-weight:400;color:#606060;letter-spacing:0.29px;z-index:2;-webkit-text-stroke:0.15px #606060;">Appointments</div>
<div class="b" style="left:1043px;top:518px;width:50px;height:28px;background:#007bff;border-radius:14px;z-index:2;"></div><div class="b" style="left:1067px;top:520px;width:24px;height:24px;background:#fff;border-radius:50%;box-shadow:-0.5px 1px 2px rgba(0,0,0,0.18);z-index:2;"></div>
<div class="t" style="left:1165.2px;top:526.24px;font-size:13px;line-height:13px;height:13px;font-weight:400;color:#606060;letter-spacing:-0.09px;z-index:2;-webkit-text-stroke:0.15px #606060;">Enter F Custom Field Name</div>
<div class="b" style="left:1440px;top:518px;width:50px;height:28px;background:#007bff;border-radius:14px;z-index:2;"></div><div class="b" style="left:1464px;top:520px;width:24px;height:24px;background:#fff;border-radius:50%;box-shadow:-0.5px 1px 2px rgba(0,0,0,0.18);z-index:2;"></div>
<div class="t" style="left:1498px;top:526.24px;font-size:13px;line-height:13px;height:13px;font-weight:400;color:#606060;letter-spacing:-0.1px;z-index:2;-webkit-text-stroke:0.15px #606060;">Active</div>
<div class="b" style="left:1651px;top:518px;width:50px;height:28px;background:#007bff;border-radius:14px;z-index:2;"></div><div class="b" style="left:1675px;top:520px;width:24px;height:24px;background:#fff;border-radius:50%;box-shadow:-0.5px 1px 2px rgba(0,0,0,0.18);z-index:2;"></div>
<svg class="i" style="left:1806.7px;top:523px;z-index:2;stroke-width:1.1" width="16" height="17" viewBox="0 0 16 17" fill="none" stroke="#666" stroke-width="1.2" stroke-linecap="round" stroke-linejoin="round"><path d="M2.2 9.8 L10.4 1.6 L13.2 4.4 L5 12.6 L2.8 12.8 Q1.6 12.8 1.7 11.7 Z M9 3 L11.8 5.8 M0.6 15.6 H12.6"/></svg>
<div class="t" style="left:236px;top:574.24px;font-size:13px;line-height:13px;height:13px;font-weight:700;color:#666;letter-spacing:-0.25px;z-index:2;">G Custom Field Name</div>
<div class="t" style="left:568px;top:574.24px;font-size:13px;line-height:13px;height:13px;font-weight:400;color:#606060;letter-spacing:0.15px;z-index:2;-webkit-text-stroke:0.15px #606060;">Numeric</div>
<div class="t" style="left:751.2px;top:574.24px;font-size:13px;line-height:13px;height:13px;font-weight:400;color:#606060;letter-spacing:0.13px;z-index:2;-webkit-text-stroke:0.15px #606060;">Patients</div>
<div class="b" style="left:1043px;top:566px;width:50px;height:28px;background:#e8e7e7;border-radius:14px;z-index:2;"></div><div class="b" style="left:1044.5px;top:568px;width:24.5px;height:24.5px;background:#fff;border-radius:50%;box-shadow:-0.5px 1.5px 3px rgba(0,0,0,0.22);z-index:2;"></div>
<div class="t" style="left:1165.2px;top:574.24px;font-size:13px;line-height:13px;height:13px;font-weight:400;color:#606060;letter-spacing:-0.09px;z-index:2;-webkit-text-stroke:0.15px #606060;">Enter G Custom Field Name</div>
<div class="b" style="left:1440px;top:566px;width:50px;height:28px;background:#007bff;border-radius:14px;z-index:2;"></div><div class="b" style="left:1464px;top:568px;width:24px;height:24px;background:#fff;border-radius:50%;box-shadow:-0.5px 1px 2px rgba(0,0,0,0.18);z-index:2;"></div>
<div class="t" style="left:1498px;top:574.24px;font-size:13px;line-height:13px;height:13px;font-weight:400;color:#606060;letter-spacing:-0.1px;z-index:2;-webkit-text-stroke:0.15px #606060;">Active</div>
<div class="b" style="left:1651px;top:566px;width:50px;height:28px;background:#e8e7e7;border-radius:14px;z-index:2;"></div><div class="b" style="left:1652.5px;top:568px;width:24.5px;height:24.5px;background:#fff;border-radius:50%;box-shadow:-0.5px 1.5px 3px rgba(0,0,0,0.22);z-index:2;"></div>
<svg class="i" style="left:1809.1000000000001px;top:571px;z-index:2;stroke-width:1.1" width="16" height="17" viewBox="0 0 16 17" fill="none" stroke="#666" stroke-width="1.2" stroke-linecap="round" stroke-linejoin="round"><path d="M2.2 9.8 L10.4 1.6 L13.2 4.4 L5 12.6 L2.8 12.8 Q1.6 12.8 1.7 11.7 Z M9 3 L11.8 5.8 M0.6 15.6 H12.6"/></svg>
<div class="b" style="left:220px;top:604px;width:1633px;height:47px;background:#f9f9f9;z-index:2;"></div>
<div class="t" style="left:236px;top:622.24px;font-size:13px;line-height:13px;height:13px;font-weight:700;color:#666;letter-spacing:-0.25px;z-index:2;">D1 Custom Field Name</div>
<div class="t" style="left:568px;top:622.24px;font-size:13px;line-height:13px;height:13px;font-weight:400;color:#606060;letter-spacing:-0.24px;z-index:2;-webkit-text-stroke:0.15px #606060;">Checkbox</div>
<div class="t" style="left:751.2px;top:622.24px;font-size:13px;line-height:13px;height:13px;font-weight:400;color:#606060;letter-spacing:0.29px;z-index:2;-webkit-text-stroke:0.15px #606060;">Appointments</div>
<div class="b" style="left:1043px;top:614px;width:50px;height:28px;background:#007bff;border-radius:14px;z-index:2;"></div><div class="b" style="left:1067px;top:616px;width:24px;height:24px;background:#fff;border-radius:50%;box-shadow:-0.5px 1px 2px rgba(0,0,0,0.18);z-index:2;"></div>
<div class="t" style="left:1165.2px;top:622.24px;font-size:13px;line-height:13px;height:13px;font-weight:400;color:#606060;letter-spacing:-0.09px;z-index:2;-webkit-text-stroke:0.15px #606060;">Enter D1 Custom Field Name</div>
<div class="b" style="left:1440px;top:614px;width:50px;height:28px;background:#007bff;border-radius:14px;z-index:2;"></div><div class="b" style="left:1464px;top:616px;width:24px;height:24px;background:#fff;border-radius:50%;box-shadow:-0.5px 1px 2px rgba(0,0,0,0.18);z-index:2;"></div>
<div class="t" style="left:1498px;top:622.24px;font-size:13px;line-height:13px;height:13px;font-weight:400;color:#606060;letter-spacing:-0.1px;z-index:2;-webkit-text-stroke:0.15px #606060;">Active</div>
<div class="b" style="left:1651px;top:614px;width:50px;height:28px;background:#007bff;border-radius:14px;z-index:2;"></div><div class="b" style="left:1675px;top:616px;width:24px;height:24px;background:#fff;border-radius:50%;box-shadow:-0.5px 1px 2px rgba(0,0,0,0.18);z-index:2;"></div>
<svg class="i" style="left:1806.7px;top:619px;z-index:2;stroke-width:1.1" width="16" height="17" viewBox="0 0 16 17" fill="none" stroke="#666" stroke-width="1.2" stroke-linecap="round" stroke-linejoin="round"><path d="M2.2 9.8 L10.4 1.6 L13.2 4.4 L5 12.6 L2.8 12.8 Q1.6 12.8 1.7 11.7 Z M9 3 L11.8 5.8 M0.6 15.6 H12.6"/></svg>
<div class="t" style="left:236px;top:670.24px;font-size:13px;line-height:13px;height:13px;font-weight:700;color:#666;letter-spacing:-0.25px;z-index:2;">E1 Custom Field Name</div>
<div class="t" style="left:568px;top:670.24px;font-size:13px;line-height:13px;height:13px;font-weight:400;color:#606060;letter-spacing:0.05px;z-index:2;-webkit-text-stroke:0.15px #606060;">Text</div>
<div class="t" style="left:751.2px;top:670.24px;font-size:13px;line-height:13px;height:13px;font-weight:400;color:#606060;letter-spacing:0.13px;z-index:2;-webkit-text-stroke:0.15px #606060;">Patients</div>
<div class="b" style="left:1043px;top:662px;width:50px;height:28px;background:#e8e7e7;border-radius:14px;z-index:2;"></div><div class="b" style="left:1044.5px;top:664px;width:24.5px;height:24.5px;background:#fff;border-radius:50%;box-shadow:-0.5px 1.5px 3px rgba(0,0,0,0.22);z-index:2;"></div>
<div class="t" style="left:1165.2px;top:670.24px;font-size:13px;line-height:13px;height:13px;font-weight:400;color:#606060;letter-spacing:-0.09px;z-index:2;-webkit-text-stroke:0.15px #606060;">Enter E1 Custom Field Name</div>
<div class="b" style="left:1440px;top:662px;width:50px;height:28px;background:#007bff;border-radius:14px;z-index:2;"></div><div class="b" style="left:1464px;top:664px;width:24px;height:24px;background:#fff;border-radius:50%;box-shadow:-0.5px 1px 2px rgba(0,0,0,0.18);z-index:2;"></div>
<div class="t" style="left:1498px;top:670.24px;font-size:13px;line-height:13px;height:13px;font-weight:400;color:#606060;letter-spacing:-0.1px;z-index:2;-webkit-text-stroke:0.15px #606060;">Active</div>
<div class="b" style="left:1651px;top:662px;width:50px;height:28px;background:#e8e7e7;border-radius:14px;z-index:2;"></div><div class="b" style="left:1652.5px;top:664px;width:24.5px;height:24.5px;background:#fff;border-radius:50%;box-shadow:-0.5px 1.5px 3px rgba(0,0,0,0.22);z-index:2;"></div>
<svg class="i" style="left:1806.7px;top:667px;z-index:2;stroke-width:1.1" width="16" height="17" viewBox="0 0 16 17" fill="none" stroke="#666" stroke-width="1.2" stroke-linecap="round" stroke-linejoin="round"><path d="M2.2 9.8 L10.4 1.6 L13.2 4.4 L5 12.6 L2.8 12.8 Q1.6 12.8 1.7 11.7 Z M9 3 L11.8 5.8 M0.6 15.6 H12.6"/></svg>
<svg class="i" style="left:230px;top:715px;z-index:2;" width="180" height="25" viewBox="230 715 180 25"><g fill="#b4b4b4"><rect x="240.6" y="724" width="1.4" height="8"/><path d="M248 724 L242.4 728 L248 732 Z"/><path d="M272 724 L264.6 728 L272 732 Z"/></g></svg>
<div class="b" style="left:286px;top:716px;width:24px;height:24px;background:#e8e7e7;border-radius:4px;z-index:2;"></div>
<div class="t" style="left:294px;top:721.33px;font-size:14px;line-height:14px;height:14px;font-weight:400;color:#1a82ff;letter-spacing:0px;z-index:2;">1</div>
<div class="t" style="left:318px;top:721.33px;font-size:14px;line-height:14px;height:14px;font-weight:400;color:#666;letter-spacing:0px;z-index:2;">2</div>
<div class="t" style="left:342px;top:721.33px;font-size:14px;line-height:14px;height:14px;font-weight:400;color:#666;letter-spacing:0px;z-index:2;">3</div>
<svg class="i" style="left:360px;top:715px;z-index:2;" width="50" height="25" viewBox="360 715 50 25"><g fill="#b4b4b4"><path d="M372 724 L379.4 728 L372 732 Z"/><path d="M396 724 L401.6 728 L396 732 Z"/><rect x="402.2" y="724" width="1.4" height="8"/></g></svg>
<div class="t" style="left:1721.5px;top:721.42px;font-size:15px;line-height:15px;height:15px;font-weight:400;color:#5e5e5e;letter-spacing:-0.1px;z-index:2;">1-9 of 27 items</div>
<svg class="i" style="left:1825px;top:712px;z-index:2;stroke-width:1.4" width="30" height="30" viewBox="0 0 30 30" fill="none" stroke="#666" stroke-width="1.2" stroke-linecap="round" stroke-linejoin="round"><path d="M22.3 17 A7.3 7.3 0 1 1 19.9 11.2 M21.2 8.6 V13.6 H16.6"/></svg>
</body></html>
